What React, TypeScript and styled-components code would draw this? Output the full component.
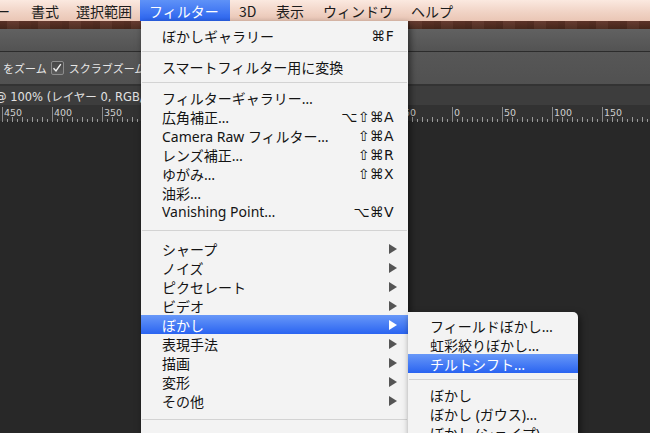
import React from 'react';
import styled, { createGlobalStyle } from 'styled-components';

const GlobalStyle = createGlobalStyle`
  html, body {
    margin: 0;
    padding: 0;
    background: #282828;
    overflow: hidden;
  }
`;

const uiFont = `"Noto Sans", "Noto Sans CJK JP", sans-serif`;

type ActiveProps = { $active?: boolean };

const Screen = styled.div`
  position: relative;
  width: 650px;
  height: 433px;
  overflow: hidden;
  display: flex;
  flex-direction: column;
  background: #282828;
  font-family: ${uiFont};
`;

const MenuBar = styled.div`
  height: 21px;
  flex: none;
  display: flex;
  align-items: stretch;
  background: linear-gradient(#fbe9e0, #f0d2c4 60%, #eac6b5);
  overflow: hidden;
`;

const MenuBarItem = styled.div<ActiveProps & { $width?: number; $shift?: number }>`
  box-sizing: border-box;
  flex: none;
  width: ${(p) => (p.$width ? `${p.$width}px` : 'auto')};
  display: flex;
  align-items: center;
  padding: 0 9px;
  margin-left: ${(p) => (p.$shift ? `${p.$shift}px` : '0')};
  font-family: "Noto Sans CJK JP", sans-serif;
  font-size: 14px;
  color: ${(p) => (p.$active ? '#ffffff' : '#1b1b1b')};
  background: ${(p) => (p.$active ? 'linear-gradient(#5f92f7, #2a63ef)' : 'transparent')};
  white-space: nowrap;
`;

const WoodStrip = styled.div`
  height: 8px;
  flex: none;
  background:
    repeating-linear-gradient(90deg, rgba(0, 0, 0, 0.1) 0 7px, rgba(255, 255, 255, 0.03) 7px 19px, rgba(0, 0, 0, 0.06) 19px 31px),
    linear-gradient(#62362a, #4a281c);
`;

const AppBand = styled.div`
  height: 22px;
  flex: none;
  background: linear-gradient(#616161, #535353);
  border-bottom: 1px solid #2c2c2c;
`;

const OptionsBar = styled.div`
  height: 32px;
  flex: none;
  display: flex;
  align-items: center;
  gap: 4px;
  background: linear-gradient(#575757, #515151);
  border-bottom: 2px solid #333333;
  color: #e6e6e6;
  font-family: "Noto Sans CJK JP", sans-serif;
  font-size: 11px;
  white-space: nowrap;
`;

const OptionText = styled.span<{ $shift?: number }>`
  margin-left: ${(p) => (p.$shift ? `${p.$shift}px` : '0')};
`;

const CheckBox = styled.span`
  box-sizing: border-box;
  width: 13px;
  height: 14px;
  flex: none;
  margin-right: 1px;
  border: 1px solid #8c8c8c;
  border-radius: 2px;
  background: linear-gradient(#474747, #5c5c5c);
  display: flex;
  align-items: center;
  justify-content: center;
`;

const TabBar = styled.div`
  height: 19px;
  flex: none;
  display: flex;
  align-items: center;
  background: #3d3d3d;
  color: #e2e2e2;
  font-family: "DejaVu Sans", "Noto Sans CJK JP", sans-serif;
  font-size: 11.5px;
  white-space: nowrap;
  overflow: hidden;
`;

const TabTitle = styled.span`
  margin-left: -5px;
`;

const RulerStrip = styled.div`
  height: 16px;
  flex: none;
  background: #323232;
  border-bottom: 1px solid #262626;
`;

const Canvas = styled.div`
  flex: 1;
  background: #282828;
`;

const Menu = styled.div<{ $left: number; $top: number; $width: number }>`
  position: absolute;
  left: ${(p) => p.$left}px;
  top: ${(p) => p.$top}px;
  width: ${(p) => p.$width}px;
  padding-top: 5px;
  padding-bottom: 40px;
  background: #f3f3f3;
  box-shadow: 2px 3px 7px rgba(0, 0, 0, 0.55);
`;

const SubMenu = styled(Menu)`
  padding-top: 4px;
  border-top-right-radius: 5px;
`;

const Item = styled.div<ActiveProps & { $indent: number }>`
  height: 19px;
  display: flex;
  align-items: center;
  justify-content: space-between;
  padding: 0 11px 0 ${(p) => p.$indent}px;
  font-size: 14px;
  color: ${(p) => (p.$active ? '#ffffff' : '#141414')};
  background: ${(p) => (p.$active ? 'linear-gradient(#6898f8, #2a64f1)' : 'transparent')};
  white-space: nowrap;
`;

const Shortcut = styled.span`
  font-family: "DejaVu Sans", sans-serif;
  font-size: 14px;
  letter-spacing: 0.3px;
  margin-right: 3px;
`;

const Separator = styled.div<{ $height: number }>`
  height: ${(p) => p.$height}px;
  display: flex;
  align-items: center;
  padding: 0 1px;
  &::after {
    content: '';
    flex: 1;
    height: 1px;
    background: #d3d3d3;
  }
`;

const Arrow = styled.span<ActiveProps>`
  width: 0;
  height: 0;
  border-top: 5px solid transparent;
  border-bottom: 5px solid transparent;
  border-left: 8px solid ${(p) => (p.$active ? '#ffffff' : '#555555')};
`;

type Entry =
  | { sep: number }
  | { label: string; key?: string; sub?: boolean; active?: boolean };

const mainEntries: Entry[] = [
  { label: 'ぼかしギャラリー', key: '⌘F' },
  { sep: 12 },
  { label: 'スマートフィルター用に変換' },
  { sep: 12 },
  { label: 'フィルターギャラリー…' },
  { label: '広角補正…', key: '⌥⇧⌘A' },
  { label: 'Camera Raw フィルター…', key: '⇧⌘A' },
  { label: 'レンズ補正…', key: '⇧⌘R' },
  { label: 'ゆがみ…', key: '⇧⌘X' },
  { label: '油彩…' },
  { label: 'Vanishing Point…', key: '⌥⌘V' },
  { sep: 18 },
  { label: 'シャープ', sub: true },
  { label: 'ノイズ', sub: true },
  { label: 'ピクセレート', sub: true },
  { label: 'ビデオ', sub: true },
  { label: 'ぼかし', sub: true, active: true },
  { label: '表現手法', sub: true },
  { label: '描画', sub: true },
  { label: '変形', sub: true },
  { label: 'その他', sub: true },
  { sep: 18 },
];

const blurEntries: Entry[] = [
  { label: 'フィールドぼかし…' },
  { label: '虹彩絞りぼかし…' },
  { label: 'チルトシフト…', active: true },
  { sep: 12 },
  { label: 'ぼかし' },
  { label: 'ぼかし (ガウス)…' },
  { label: 'ぼかし (シェイプ)…' },
];

const renderEntries = (entries: Entry[], indent: number) =>
  entries.map((e, i) =>
    'sep' in e ? (
      <Separator key={i} $height={e.sep} />
    ) : (
      <Item key={i} $active={e.active} $indent={indent}>
        <span>{e.label}</span>
        {e.key ? <Shortcut>{e.key}</Shortcut> : null}
        {e.sub ? <Arrow $active={e.active} /> : null}
      </Item>
    )
  );

const Ruler = () => {
  const ticks = [];
  for (let x = 2; x < 650; x += 5) {
    const major = (x - 2) % 50 === 0;
    const mid = (x - 2) % 10 === 0;
    const h = major ? 15 : mid ? 5 : 3;
    ticks.push(
      <line key={x} x1={x + 0.5} x2={x + 0.5} y1={16 - h} y2={16} stroke={major ? '#8a8a8a' : '#9a9a9a'} strokeWidth={1} />
    );
  }
  const labels = [];
  for (let k = 0; k * 50 + 2 < 650; k++) {
    labels.push(
      <text key={k} x={k * 50 + 4} y={10} fill="#cfcfcf" fontSize={9.5} fontFamily="'DejaVu Sans', sans-serif">
        {Math.abs(450 - k * 50)}
      </text>
    );
  }
  return (
    <svg width={650} height={16}>
      {ticks}
      {labels}
    </svg>
  );
};

const CheckMark = () => (
  <svg width={10} height={10} viewBox="0 0 10 10">
    <path d="M1.5 5.2 L4 8 L8.8 1.2" fill="none" stroke="#f2f2f2" strokeWidth={1.4} />
  </svg>
);

export default function App() {
  return (
    <Screen>
      <GlobalStyle />
      <MenuBar>
        <MenuBarItem $shift={-13} $width={35}>ー</MenuBarItem>
        <MenuBarItem $width={45}>書式</MenuBarItem>
        <MenuBarItem $width={73}>選択範囲</MenuBarItem>
        <MenuBarItem $width={90} $active>フィルター</MenuBarItem>
        <MenuBarItem $width={37}>3D</MenuBarItem>
        <MenuBarItem $width={47}>表示</MenuBarItem>
        <MenuBarItem $width={88}>ウィンドウ</MenuBarItem>
        <MenuBarItem>ヘルプ</MenuBarItem>
      </MenuBar>
      <WoodStrip />
      <AppBand />
      <OptionsBar>
        <OptionText $shift={3}>をズーム</OptionText>
        <CheckBox>
          <CheckMark />
        </CheckBox>
        <OptionText>スクラブズーム</OptionText>
      </OptionsBar>
      <TabBar>
        <TabTitle>@ 100% (レイヤー 0, RGB/8#) *</TabTitle>
      </TabBar>
      <RulerStrip>
        <Ruler />
      </RulerStrip>
      <Canvas />

      <Menu $left={141} $top={21} $width={267}>
        {renderEntries(mainEntries, 21)}
      </Menu>
      <SubMenu $left={408} $top={312} $width={170}>
        {renderEntries(blurEntries, 22)}
      </SubMenu>
    </Screen>
  );
}
